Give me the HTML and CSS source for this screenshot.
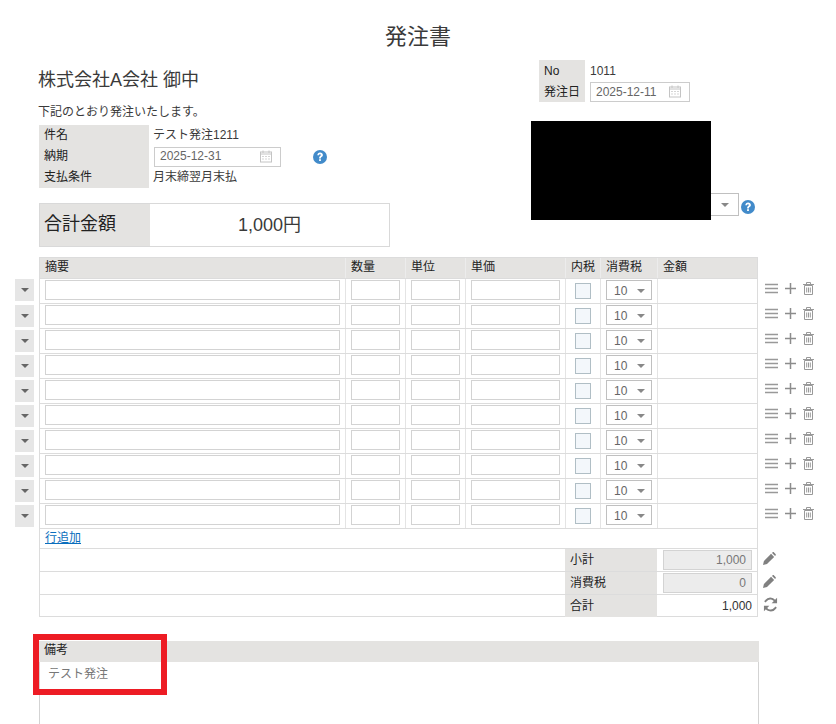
FILE: index.html
```html
<!DOCTYPE html>
<html lang="ja">
<head>
<meta charset="utf-8">
<title>発注書</title>
<link rel="stylesheet" href="styles.css">
</head>
<body>
<svg class="defs" width="0" height="0">
  <defs>
    <g id="cal" fill="none" stroke="#c4c4c4" stroke-width="1">
      <rect x="0.5" y="1.5" width="11" height="10"/>
      <path d="M0.5 3.500h11M3 0v2.500M9 0v2.500"/>
      <path d="M2.500 6h1M5.500 6h1M8.500 6h1M2.500 8.500h1M5.500 8.500h1M8.500 8.500h1" stroke="#aaa"/>
    </g>
    <g id="help">
      <circle cx="7" cy="7" r="7" fill="#428bca"/>
      <path d="M4.300 5.300C4.400 3.600 5.500 2.500 7.100 2.500c1.600 0 2.800 1 2.800 2.500 0 1.100-.7 1.700-1.300 2.100-.5.300-.7.600-.7 1.300H6.100c0-1.200.3-1.800 1-2.300.5-.3.800-.6.800-1.100 0-.5-.4-.8-.9-.8-.6 0-1 .4-1 1.100z" fill="#fff"/>
      <rect x="6.100" y="9.200" width="1.800" height="1.800" fill="#fff"/>
    </g>
    <g id="pen" fill="#808080">
      <path d="M0 14l1-4.300L8.700 2l3.300 3.300-7.700 7.700z"/>
      <path d="M9.700 1l.5-.5c.5-.5 1.200-.5 1.700 0l1.600 1.600c.5.500.5 1.200 0 1.700l-.5.500z"/>
    </g>
    <g id="sync" fill="none" stroke="#808080" stroke-width="2">
      <path d="M13.300 5.600A5.800 5.800 0 0 0 3.200 3.900L2 5.300"/>
      <path d="M2.700 10.400a5.800 5.800 0 0 0 10.100 1.700l1.200-1.400"/>
      <path d="M15 .8v5.900H9.200z" fill="#808080" stroke="none"/>
      <path d="M1 15.200V9.300h5.800z" fill="#808080" stroke="none"/>
    </g>
    <g id="bars"><path d="M0 1.500h13M0 5.500h13M0 9.500h13" stroke="#999" stroke-width="1.300" fill="none"/></g>
    <g id="plus"><path d="M5.500 0v11M0 5.500h11" stroke="#8c8c8c" stroke-width="1.500" fill="none"/></g>
    <g id="trash"><path d="M1.500 3.500h8v9h-8zM0 2.500h11M3.500 2.500V.5h4v2M3.700 5.500v5M5.500 5.500v5M7.300 5.500v5" stroke="#999" fill="none"/></g>
  </defs>
</svg>
<div class="page">
  <h1 class="title">発注書</h1>
  <div class="head">
    <div class="head-left">
      <div class="client">株式会社A会社 御中</div>
      <div class="lead">下記のとおり発注いたします。</div>
      <div class="info">
        <div class="lab">件名</div><div class="val">テスト発注1211</div>
        <div class="lab">納期</div>
        <div class="val val-date">
          <div class="date date-a"><span>2025-12-31</span><svg class="cal" viewBox="0 0 12 12"><use href="#cal"/></svg></div>
          <svg class="help help-a" viewBox="0 0 14 14"><use href="#help"/></svg>
        </div>
        <div class="lab">支払条件</div><div class="val">月末締翌月末払</div>
      </div>
      <div class="total">
        <div class="total-lab">合計金額</div>
        <div class="total-val">1,000円</div>
      </div>
    </div>
    <div class="head-right">
      <div class="meta">
        <div class="lab">No</div><div class="mval">1011</div>
        <div class="lab">発注日</div>
        <div class="mval"><div class="date date-b"><span>2025-12-11</span><svg class="cal" viewBox="0 0 12 12"><use href="#cal"/></svg></div></div>
      </div>
      <div class="company">
        <div class="mask"></div>
        <div class="sel"><i class="tri"></i></div>
        <svg class="help help-b" viewBox="0 0 14 14"><use href="#help"/></svg>
      </div>
    </div>
  </div>

  <div class="table-wrap">
    <div class="thead">
      <div class="c1">摘要</div><div class="c2">数量</div><div class="c3">単位</div><div class="c4">単価</div><div class="c5">内税</div><div class="c6">消費税</div><div class="c7">金額</div>
    </div>
    <div class="row"><div class="c1"><span class="tin"></span></div><div class="c2"><span class="tin"></span></div><div class="c3"><span class="tin"></span></div><div class="c4"><span class="tin"></span></div><div class="c5"><span class="chk"></span></div><div class="c6"><span class="tsel">10<i class="tri"></i></span></div><div class="c7"></div><span class="handle handle-first"><i class="tri"></i></span><span class="tools"><svg width="13" height="11"><use href="#bars"/></svg><svg width="11" height="11"><use href="#plus"/></svg><svg width="11" height="13"><use href="#trash"/></svg></span></div>
    <div class="row"><div class="c1"><span class="tin"></span></div><div class="c2"><span class="tin"></span></div><div class="c3"><span class="tin"></span></div><div class="c4"><span class="tin"></span></div><div class="c5"><span class="chk"></span></div><div class="c6"><span class="tsel">10<i class="tri"></i></span></div><div class="c7"></div><span class="handle"><i class="tri"></i></span><span class="tools"><svg width="13" height="11"><use href="#bars"/></svg><svg width="11" height="11"><use href="#plus"/></svg><svg width="11" height="13"><use href="#trash"/></svg></span></div>
    <div class="row"><div class="c1"><span class="tin"></span></div><div class="c2"><span class="tin"></span></div><div class="c3"><span class="tin"></span></div><div class="c4"><span class="tin"></span></div><div class="c5"><span class="chk"></span></div><div class="c6"><span class="tsel">10<i class="tri"></i></span></div><div class="c7"></div><span class="handle"><i class="tri"></i></span><span class="tools"><svg width="13" height="11"><use href="#bars"/></svg><svg width="11" height="11"><use href="#plus"/></svg><svg width="11" height="13"><use href="#trash"/></svg></span></div>
    <div class="row"><div class="c1"><span class="tin"></span></div><div class="c2"><span class="tin"></span></div><div class="c3"><span class="tin"></span></div><div class="c4"><span class="tin"></span></div><div class="c5"><span class="chk"></span></div><div class="c6"><span class="tsel">10<i class="tri"></i></span></div><div class="c7"></div><span class="handle"><i class="tri"></i></span><span class="tools"><svg width="13" height="11"><use href="#bars"/></svg><svg width="11" height="11"><use href="#plus"/></svg><svg width="11" height="13"><use href="#trash"/></svg></span></div>
    <div class="row"><div class="c1"><span class="tin"></span></div><div class="c2"><span class="tin"></span></div><div class="c3"><span class="tin"></span></div><div class="c4"><span class="tin"></span></div><div class="c5"><span class="chk"></span></div><div class="c6"><span class="tsel">10<i class="tri"></i></span></div><div class="c7"></div><span class="handle"><i class="tri"></i></span><span class="tools"><svg width="13" height="11"><use href="#bars"/></svg><svg width="11" height="11"><use href="#plus"/></svg><svg width="11" height="13"><use href="#trash"/></svg></span></div>
    <div class="row"><div class="c1"><span class="tin"></span></div><div class="c2"><span class="tin"></span></div><div class="c3"><span class="tin"></span></div><div class="c4"><span class="tin"></span></div><div class="c5"><span class="chk"></span></div><div class="c6"><span class="tsel">10<i class="tri"></i></span></div><div class="c7"></div><span class="handle"><i class="tri"></i></span><span class="tools"><svg width="13" height="11"><use href="#bars"/></svg><svg width="11" height="11"><use href="#plus"/></svg><svg width="11" height="13"><use href="#trash"/></svg></span></div>
    <div class="row"><div class="c1"><span class="tin"></span></div><div class="c2"><span class="tin"></span></div><div class="c3"><span class="tin"></span></div><div class="c4"><span class="tin"></span></div><div class="c5"><span class="chk"></span></div><div class="c6"><span class="tsel">10<i class="tri"></i></span></div><div class="c7"></div><span class="handle"><i class="tri"></i></span><span class="tools"><svg width="13" height="11"><use href="#bars"/></svg><svg width="11" height="11"><use href="#plus"/></svg><svg width="11" height="13"><use href="#trash"/></svg></span></div>
    <div class="row"><div class="c1"><span class="tin"></span></div><div class="c2"><span class="tin"></span></div><div class="c3"><span class="tin"></span></div><div class="c4"><span class="tin"></span></div><div class="c5"><span class="chk"></span></div><div class="c6"><span class="tsel">10<i class="tri"></i></span></div><div class="c7"></div><span class="handle"><i class="tri"></i></span><span class="tools"><svg width="13" height="11"><use href="#bars"/></svg><svg width="11" height="11"><use href="#plus"/></svg><svg width="11" height="13"><use href="#trash"/></svg></span></div>
    <div class="row"><div class="c1"><span class="tin"></span></div><div class="c2"><span class="tin"></span></div><div class="c3"><span class="tin"></span></div><div class="c4"><span class="tin"></span></div><div class="c5"><span class="chk"></span></div><div class="c6"><span class="tsel">10<i class="tri"></i></span></div><div class="c7"></div><span class="handle"><i class="tri"></i></span><span class="tools"><svg width="13" height="11"><use href="#bars"/></svg><svg width="11" height="11"><use href="#plus"/></svg><svg width="11" height="13"><use href="#trash"/></svg></span></div>
    <div class="row"><div class="c1"><span class="tin"></span></div><div class="c2"><span class="tin"></span></div><div class="c3"><span class="tin"></span></div><div class="c4"><span class="tin"></span></div><div class="c5"><span class="chk"></span></div><div class="c6"><span class="tsel">10<i class="tri"></i></span></div><div class="c7"></div><span class="handle"><i class="tri"></i></span><span class="tools"><svg width="13" height="11"><use href="#bars"/></svg><svg width="11" height="11"><use href="#plus"/></svg><svg width="11" height="13"><use href="#trash"/></svg></span></div>
    <div class="addrow"><a href="#">行追加</a></div>
    <div class="sum">
      <div class="sum-e"></div><div class="sum-l">小計</div>
      <div class="sum-v"><div class="ro">1,000</div><svg class="side-ic" viewBox="0 0 14 14"><use href="#pen"/></svg></div>
    </div>
    <div class="sum">
      <div class="sum-e"></div><div class="sum-l">消費税</div>
      <div class="sum-v"><div class="ro">0</div><svg class="side-ic" viewBox="0 0 14 14"><use href="#pen"/></svg></div>
    </div>
    <div class="sum sum-last">
      <div class="sum-e"></div><div class="sum-l">合計</div>
      <div class="sum-v"><div class="plain">1,000</div><svg class="side-ic side-sync" viewBox="0 0 16 16"><use href="#sync"/></svg></div>
    </div>
  </div>

  <div class="notes">
    <div class="notes-h">備考</div>
    <div class="notes-b">テスト発注</div>
    <div class="mark"></div>
  </div>
</div>
</body>
</html>
```
FILE: styles.css
```css
* { box-sizing: border-box; }
html, body { margin: 0; padding: 0; background: #fff; }
body {
  width: 836px; height: 724px; overflow: hidden;
  font-family: "Liberation Sans", "Noto Sans CJK JP", sans-serif;
  font-size: 12px; color: #3a3a3a;
}
.page { padding: 0 0 0 39px; width: 836px; }
.title { margin: 0; padding-top: 24px; height: 61px; width: 758px; text-align: center; font-size: 22px; font-weight: 400; line-height: 26px; }
.head { display: flex; width: 719px; height: 196px; }
.head-left { width: 492px; }
.client { margin-top: 9px; font-size: 18px; line-height: 20px; margin-left: -1px; }
.lead { margin-top: 14px; line-height: 16px; height: 17px; margin-left: -1px; }
.info { display: grid; grid-template-columns: 110px 1fr; grid-template-rows: 21px 21px 21px; width: 351px; margin-top: 4px; line-height: 19px; }
.lab { background: #e4e3e1; padding-left: 5px; color: #222; display: flex; align-items: center; }
.val { padding-left: 4px; display: flex; align-items: center; }
.mval { padding-left: 5px; display: flex; align-items: center; }
.val-date { gap: 32px; padding-left: 5px; }
.date { display: flex; align-items: center; justify-content: space-between; height: 20px; border: 1px solid #ccc; color: #666; padding: 0 8px 0 5px; }
.date-a { width: 127px; }
.date-b { width: 100px; }
.cal { width: 12px; height: 13px; }
.help { display: block; flex: none; }
.help-a { width: 14px; height: 14px; }
.help-b { width: 14px; height: 14px; margin-left: 2px; margin-top: 73px; }
.total { display: flex; width: 351px; height: 44px; margin-top: 15px; border: 1px solid #d9d9d9; }
.total-lab { width: 110px; background: #e4e3e1; font-size: 18px; padding-left: 4px; line-height: 40px; color: #222; }
.total-val { flex: 1; text-align: center; font-size: 18px; line-height: 42px; }
.head-right { width: 227px; margin-left: -1px; }
.meta { display: grid; grid-template-columns: 46px 1fr; grid-template-rows: 21px 21px; margin-left: 9px; margin-top: -1px; width: 200px; line-height: 16px; }
.company { display: flex; align-items: center; margin-top: 19px; height: 99px; }
.mask { width: 180px; height: 99px; background: #000; flex: none; margin-left: 1px; }
.sel { width: 28px; height: 23px; margin-top: 68px; border: 1px solid #c0c0c0; border-left: 0; display: flex; align-items: center; justify-content: center; }
.tri { display: block; width: 0; height: 0; border: 4px solid transparent; border-top: 4px solid #888; border-bottom: 0; }
.table-wrap { width: 719px; }
.thead { display: flex; height: 22px; background: #e4e3e1; border: 1px solid #dcdcdc; line-height: 18px; color: #222; }
.thead > div { padding-left: 5px; border-right: 1px solid #ececec; }
.thead > div:last-child { border-right: 0; }
.c1 { width: 306px; flex: none; }
.c2, .c3 { width: 60px; flex: none; }
.c4 { width: 100px; flex: none; }
.c5 { width: 35px; flex: none; }
.c6 { width: 57px; flex: none; }
.c7 { flex: 1; }
.row { display: flex; height: 25px; border: 1px solid #dcdcdc; border-width: 0 1px 1px; position: relative; }
.row > div { display: flex; align-items: flex-start; padding: 1px 0 0 5px; border-right: 1px solid #e4e4e4; }
.row > .c7 { border-right: 0; }
.tin { display: block; height: 20px; border: 1px solid #d3d3d3; background: #fff; flex: 1; margin-right: 5px; }
.chk { width: 16px; height: 16px; border: 1px solid #b0bec5; background: #f3f7fb; margin: 3px 0 0 4px; }
.tsel { width: 46px; height: 20px; border: 1px solid #c0c0c0; display: flex; align-items: center; justify-content: space-between; padding: 1px 6px 0 7px; color: #666; }
.handle { position: absolute; left: -25px; top: 1px; width: 19px; height: 22px; background: #e6e6e6; display: flex; align-items: center; justify-content: center; }
.handle-first { top: 0; }
.handle .tri { border-top-color: #666; }
.tools { position: absolute; left: 725px; top: 4px; display: flex; align-items: flex-start; gap: 7px; }
.tools svg { display: block; }
.tools svg:last-child { margin: -1px 0 0 0; }
.addrow { height: 20px; border: 1px solid #dcdcdc; border-width: 0 1px 1px; padding-left: 5px; line-height: 18px; }
.addrow a { color: #0a6ebd; text-decoration: underline; }
.sum { display: flex; height: 23px; border: 1px solid #dcdcdc; border-width: 0 1px 1px; }
.sum-last { height: 22px; }
.sum-e { width: 525px; flex: none; }
.sum-l { width: 92px; flex: none; background: #e4e3e1; padding-left: 5px; line-height: 22px; color: #222; }
.sum-last .sum-l { height: 22px; }
.sum-v { flex: 1; position: relative; display: flex; align-items: center; padding: 0 5px 0 6px; }
.ro { width: 89px; height: 20px; border: 1px solid #d3d3d3; background: #ececec; color: #777; text-align: right; padding-right: 5px; line-height: 18px; }
.plain { width: 89px; text-align: right; color: #333; }
.side-ic { position: absolute; left: 106px; top: 3px; width: 13px; height: 13px; }
.side-sync { width: 15px; height: 15px; top: 2px; }
.notes { position: relative; width: 720px; margin-top: 24px; }
.notes-h { height: 21px; background: #e4e3e1; padding-left: 5px; line-height: 19px; color: #222; }
.notes-b { height: 70px; border: 1px solid #d3d3d3; border-width: 0 1px; padding: 4px 8px; color: #777; line-height: 16px; }
.mark { position: absolute; left: -6px; top: -7px; width: 134px; height: 61px; border: 6px solid #ed1c24; }
.defs { position: absolute; }
```
